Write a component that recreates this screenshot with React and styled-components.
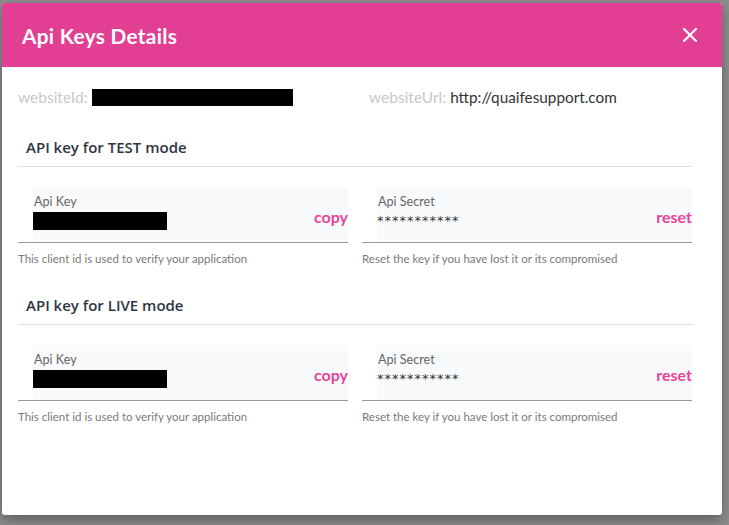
import React from "react";
import styled, { createGlobalStyle } from "styled-components";

const Global = createGlobalStyle`
  html, body { margin: 0; padding: 0; }
  body {
    background: #8e8e8e;
    font-family: Lato, "Noto Sans", sans-serif;
    width: 729px;
    height: 525px;
    overflow: hidden;
  }
`;

const Page = styled.div`
  padding: 3px 7px 0 2px;
`;

const Modal = styled.div`
  width: 720px;
  height: 512px;
  background: #fff;
  border-radius: 3px;
  overflow: hidden;
  box-shadow: 0 5px 14px rgba(0, 0, 0, 0.35);
`;

const Header = styled.div`
  height: 64px;
  background: #e23e93;
  display: flex;
  align-items: center;
  justify-content: space-between;
  padding: 0 25px 0 20px;
  box-sizing: border-box;
`;

const Title = styled.h1`
  margin: 0;
  color: #fff;
  font-family: Lato, sans-serif;
  font-weight: 700;
  font-size: 20.8px;
  letter-spacing: 0.3px;
`;

const Close = styled.button`
  border: 0;
  background: none;
  padding: 0;
  width: 14px;
  height: 14px;
  display: flex;
  cursor: pointer;
`;

const Body = styled.div`
  padding: 20px 30px 0 16px;
`;

const InfoRow = styled.div`
  display: grid;
  grid-template-columns: 351px 1fr;
  height: 20px;
  align-items: center;
`;

const Info = styled.div`
  display: flex;
  align-items: center;
  gap: 4px;
  font-size: 15.5px;
`;

const InfoLabel = styled.span`
  color: #c8c8c8;
`;

const InfoValue = styled.span`
  color: #333;
  font-size: 15.3px;
`;

const Redacted = styled.span`
  display: inline-block;
  background: #000;
  width: ${(p) => p.$w}px;
  height: ${(p) => p.$h}px;
`;

const Section = styled.section`
  margin-top: ${(p) => p.$top}px;
`;

const SectionTitle = styled.h2`
  margin: 0;
  padding: 0 0 9px 8px;
  line-height: 20px;
  font-family: "Open Sans", sans-serif;
  font-weight: 600;
  font-size: 15px;
  color: #2f3542;
  border-bottom: 1px solid #dedede;
`;

const Columns = styled.div`
  display: grid;
  grid-template-columns: 330px 330px;
  column-gap: 14px;
  margin-top: 20px;
`;

const Column = styled.div``;

const Field = styled.div`
  padding-left: 15px;
  border-bottom: 1px solid #9a9a9a;
`;

const FieldBox = styled.div`
  height: 55px;
  background: #f9fafc;
  display: flex;
  align-items: center;
  justify-content: space-between;
  box-sizing: border-box;
  padding: 0 0 0 1px;
`;

const FieldText = styled.div`
  display: flex;
  flex-direction: column;
  align-self: flex-start;
  padding-top: 7px;
`;

const FieldLabel = styled.span`
  font-size: 12.6px;
  line-height: 16px;
  color: #666;
  margin-bottom: 2px;
`;

const FieldValue = styled.span`
  font-family: "DejaVu Sans", sans-serif;
  font-size: 13px;
  line-height: 18px;
  color: #333;
  letter-spacing: 1px;
  margin-left: -1px;
  display: flex;
  align-items: center;
`;

const Action = styled.button`
  border: 0;
  background: none;
  padding: 0;
  margin-top: 3px;
  font-family: Lato, sans-serif;
  font-weight: 700;
  font-size: 16px;
  color: #e5449a;
  cursor: pointer;
`;

const Help = styled.p`
  margin: 8px 0 0 0;
  font-size: 11.5px;
  line-height: 16px;
  color: #7a7a7a;
`;

function KeyField({ label, value, action, help }) {
  return (
    <Column>
      <Field>
        <FieldBox>
          <FieldText>
            <FieldLabel>{label}</FieldLabel>
            <FieldValue>{value}</FieldValue>
          </FieldText>
          <Action>{action}</Action>
        </FieldBox>
      </Field>
      <Help>{help}</Help>
    </Column>
  );
}

function KeySection({ title, top }) {
  return (
    <Section $top={top}>
      <SectionTitle>{title}</SectionTitle>
      <Columns>
        <KeyField
          label="Api Key"
          value={<Redacted $w={134} $h={18} />}
          action="copy"
          help="This client id is used to verify your application"
        />
        <KeyField
          label="Api Secret"
          value="***********"
          action="reset"
          help="Reset the key if you have lost it or its compromised"
        />
      </Columns>
    </Section>
  );
}

export default function App() {
  return (
    <>
      <Global />
      <Page>
        <Modal>
          <Header>
            <Title>Api Keys Details</Title>
            <Close aria-label="close">
              <svg width="14" height="14" viewBox="0 0 14 14">
                <path d="M1 1 L13 13 M13 1 L1 13" stroke="#fff" strokeWidth="2.2" strokeLinecap="round" />
              </svg>
            </Close>
          </Header>
          <Body>
            <InfoRow>
              <Info>
                <InfoLabel>websiteId:</InfoLabel>
                <Redacted $w={201} $h={17} />
              </Info>
              <Info>
                <InfoLabel>websiteUrl:</InfoLabel>
                <InfoValue>http://quaifesupport.com</InfoValue>
              </Info>
            </InfoRow>
            <KeySection title="API key for TEST mode" top={30} />
            <KeySection title="API key for LIVE mode" top={28} />
          </Body>
        </Modal>
      </Page>
    </>
  );
}
